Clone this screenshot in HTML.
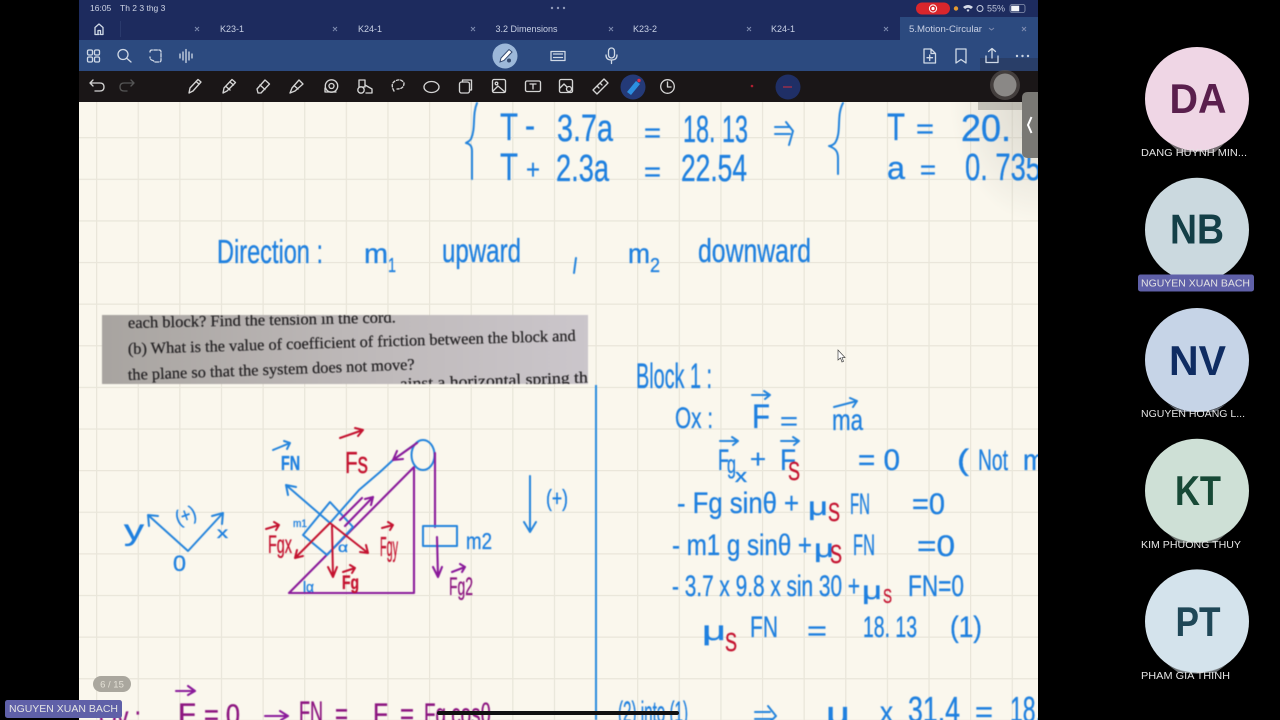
<!DOCTYPE html>
<html><head><meta charset="utf-8"><style>
html,body{margin:0;padding:0;background:#000;width:1280px;height:720px;overflow:hidden}
svg{position:absolute;left:0;top:0;display:block}
text{font-family:"Liberation Sans",sans-serif}
.h text,text.h{fill:#1f80df;stroke:#1f80df;stroke-width:.35}
.r text,text.r{fill:#c4122f;stroke:#c4122f;stroke-width:.35}
.p text,text.p{fill:#8c1580;stroke:#8c1580;stroke-width:.35}
.blue{fill:none;stroke:#2484dc;stroke-width:2;stroke-linecap:round;stroke-linejoin:round}
.red{fill:none;stroke:#c4122f;stroke-width:2;stroke-linecap:round;stroke-linejoin:round}
.pur{fill:none;stroke:#8a1a9a;stroke-width:2.1;stroke-linecap:round;stroke-linejoin:round}
.ic{fill:none;stroke:#d0d9e6;stroke-width:1.3;stroke-linecap:round;stroke-linejoin:round}
.tl{fill:none;stroke:#d4d4d4;stroke-width:1.35;stroke-linecap:round;stroke-linejoin:round}
.x{fill:none;stroke:#7f8cb0;stroke-width:1}
.tab{font-size:9px;fill:#c8d0e4}
.nm{font-size:10.5px;fill:#e4e4e4}
.av{font-size:42px;text-anchor:middle;font-weight:bold}
</style></head><body>
<svg width="1280" height="720" viewBox="0 0 1280 720" xmlns="http://www.w3.org/2000/svg">
<defs>
<pattern id="g" width="41.62" height="41.62" patternUnits="userSpaceOnUse" x="96" y="12.2">
<rect width="41.62" height="41.62" fill="#faf7ed"/>
<path d="M.6 0V41.62M0 .6H41.62" stroke="#e9e6da" stroke-width="1.3" fill="none"/>
</pattern>
<linearGradient id="bk" x1="0" x2="1" y1="0" y2="0"><stop offset="0" stop-color="#a8a4a0"/><stop offset=".5" stop-color="#bdb8b8"/><stop offset="1" stop-color="#cbc6cb"/></linearGradient>
<linearGradient id="sh" x1="0" x2="1" y1="0" y2="1"><stop offset=".3" stop-color="#b8b4aa" stop-opacity="0"/><stop offset="1" stop-color="#b8b4aa" stop-opacity="0"/></linearGradient>
<radialGradient id="sh2" cx="1" cy="0" r="1"><stop offset="0" stop-color="#a8a59c" stop-opacity=".4"/><stop offset="1" stop-color="#a8a59c" stop-opacity="0"/></radialGradient>
<clipPath id="pg"><rect x="79" y="102" width="959" height="618"/></clipPath>
<clipPath id="bc"><rect x="102" y="315" width="486" height="69"/></clipPath>
</defs>
<rect width="1280" height="720" fill="#000"/>
<!-- paper -->
<rect x="79" y="102" width="959" height="618" fill="url(#g)"/>
<rect x="950" y="102" width="88" height="120" fill="url(#sh2)"/>

<g clip-path="url(#pg)" style="filter:blur(.45px)">
<!-- book excerpt -->
<rect x="102" y="315" width="486" height="69" fill="url(#bk)"/>
<g clip-path="url(#bc)" fill="#222022" stroke="#222022" stroke-width=".2" style="font-size:16px">
<text x="128" y="328" transform="rotate(-1.2 128 328)" textLength="268" lengthAdjust="spacingAndGlyphs" style="font-family:'Liberation Serif',serif">each block? Find the tension in the cord.</text>
<text x="128" y="354" transform="rotate(-1.7 128 354)" textLength="448" lengthAdjust="spacingAndGlyphs" style="font-family:'Liberation Serif',serif">(b) What is the value of coefficient of friction between the block and</text>
<text x="128" y="380" transform="rotate(-2.1 128 380)" textLength="287" lengthAdjust="spacingAndGlyphs" style="font-family:'Liberation Serif',serif">the plane so that the system does not move?</text>
<text x="400" y="389" transform="rotate(-2 400 389)" textLength="188" lengthAdjust="spacingAndGlyphs" style="font-family:'Liberation Serif',serif">ainst a horizontal spring th</text>
</g>

<!-- top equations -->
<path class="blue" d="M477 103C472 115 476 128 471 139C469 142 467 142 466 143C470 144 472 146 472 151L472 179"/>
<path class="blue" d="M843 103C836 116 842 132 835 143C832 146 830 146 829 146C834 148 838 150 838 158L838 174"/>
<g class="h" style="font-size:38px">
<text x="500" y="140" textLength="18" lengthAdjust="spacingAndGlyphs">T</text>
<text x="525" y="138" textLength="10" lengthAdjust="spacingAndGlyphs">-</text>
<text x="557" y="141" textLength="56" lengthAdjust="spacingAndGlyphs">3.7a</text>
<text x="644" y="142" textLength="17" lengthAdjust="spacingAndGlyphs" style="font-size:28px">=</text>
<text x="683" y="142" textLength="65" lengthAdjust="spacingAndGlyphs">18. 13</text>
<text x="500" y="180" textLength="18" lengthAdjust="spacingAndGlyphs">T</text>
<text x="526" y="179" textLength="14" lengthAdjust="spacingAndGlyphs" style="font-size:28px">+</text>
<text x="556" y="181" textLength="53" lengthAdjust="spacingAndGlyphs">2.3a</text>
<text x="644" y="181" textLength="17" lengthAdjust="spacingAndGlyphs" style="font-size:28px">=</text>
<text x="681" y="181" textLength="66" lengthAdjust="spacingAndGlyphs">22.54</text>
<text x="887" y="140" textLength="18" lengthAdjust="spacingAndGlyphs">T</text>
<text x="916" y="138" textLength="18" lengthAdjust="spacingAndGlyphs" style="font-size:28px">=</text>
<text x="961" y="141" textLength="80" lengthAdjust="spacingAndGlyphs">20. 8</text>
<text x="887" y="179" textLength="18" lengthAdjust="spacingAndGlyphs" style="font-size:32px">a</text>
<text x="920" y="179" textLength="16" lengthAdjust="spacingAndGlyphs" style="font-size:28px">=</text>
<text x="965" y="180" textLength="76" lengthAdjust="spacingAndGlyphs">0. 735</text>
</g>
<path class="blue" d="M775 127H790M775 134H790M786 122L793 131L789 145"/>

<!-- direction line -->
<g class="h" style="font-size:33px">
<text x="217" y="263" textLength="106" lengthAdjust="spacingAndGlyphs">Direction :</text>
<text x="364" y="263" textLength="24" lengthAdjust="spacingAndGlyphs" style="font-size:28px">m</text>
<text x="388" y="272" textLength="8" lengthAdjust="spacingAndGlyphs" style="font-size:20px">1</text>
<text x="442" y="262" textLength="79" lengthAdjust="spacingAndGlyphs">upward</text>
<text x="628" y="263" textLength="22" lengthAdjust="spacingAndGlyphs" style="font-size:28px">m</text>
<text x="650" y="272" textLength="10" lengthAdjust="spacingAndGlyphs" style="font-size:20px">2</text>
<text x="698" y="262" textLength="113" lengthAdjust="spacingAndGlyphs">downward</text>
</g>
<path class="blue" d="M576 258L574 273"/>

<!-- vertical divider -->
<path d="M596 385V720" stroke="#2a8de0" stroke-width="2" fill="none"/>

<!-- right block -->
<g class="h" style="font-size:30px">
<text x="636" y="388" textLength="76" lengthAdjust="spacingAndGlyphs" style="font-size:35px">Block 1 :</text>
<text x="675" y="428" textLength="38" lengthAdjust="spacingAndGlyphs">Ox :</text>
<text x="752" y="428" textLength="18" lengthAdjust="spacingAndGlyphs" style="font-size:34px">F</text>
<text x="780" y="430" textLength="18" lengthAdjust="spacingAndGlyphs" style="font-size:26px">=</text>
<text x="832" y="430" textLength="31" lengthAdjust="spacingAndGlyphs">ma</text>
<text x="718" y="470" textLength="11" lengthAdjust="spacingAndGlyphs">F</text>
<text x="727" y="473" textLength="9" lengthAdjust="spacingAndGlyphs" style="font-size:26px">g</text>
<text x="735" y="482" textLength="12" lengthAdjust="spacingAndGlyphs" style="font-size:18px">x</text>
<text x="750" y="468" textLength="16" lengthAdjust="spacingAndGlyphs" style="font-size:26px">+</text>
<text x="780" y="470" textLength="16" lengthAdjust="spacingAndGlyphs">F</text>
<text x="858" y="470" textLength="42" lengthAdjust="spacingAndGlyphs">= 0</text>
<text x="957" y="470" textLength="12" lengthAdjust="spacingAndGlyphs">(</text>
<text x="978" y="470" textLength="30" lengthAdjust="spacingAndGlyphs">Not</text>
<text x="1023" y="470" textLength="22" lengthAdjust="spacingAndGlyphs">m</text>
<text x="677" y="513" textLength="122" lengthAdjust="spacingAndGlyphs">- Fg sinθ  +</text>
<text x="808" y="515" textLength="20" lengthAdjust="spacingAndGlyphs" style="font-size:26px">μ</text>
<text x="850" y="514" textLength="20" lengthAdjust="spacingAndGlyphs">FN</text>
<text x="912" y="514" textLength="33" lengthAdjust="spacingAndGlyphs">=0</text>
<text x="672" y="555" textLength="140" lengthAdjust="spacingAndGlyphs">- m1 g sinθ +</text>
<text x="814" y="557" textLength="20" lengthAdjust="spacingAndGlyphs" style="font-size:26px">μ</text>
<text x="853" y="555" textLength="22" lengthAdjust="spacingAndGlyphs">FN</text>
<text x="917" y="556" textLength="38" lengthAdjust="spacingAndGlyphs">=0</text>
<text x="672" y="596" textLength="188" lengthAdjust="spacingAndGlyphs">- 3.7 x 9.8 x sin 30 +</text>
<text x="862" y="599" textLength="20" lengthAdjust="spacingAndGlyphs" style="font-size:26px">μ</text>
<text x="908" y="596" textLength="56" lengthAdjust="spacingAndGlyphs">FN=0</text>
<text x="702" y="640" textLength="24" lengthAdjust="spacingAndGlyphs" style="font-size:28px">μ</text>
<text x="750" y="637" textLength="28" lengthAdjust="spacingAndGlyphs">FN</text>
<text x="807" y="640" textLength="20" lengthAdjust="spacingAndGlyphs" style="font-size:28px">=</text>
<text x="863" y="637" textLength="54" lengthAdjust="spacingAndGlyphs">18. 13</text>
<text x="950" y="637" textLength="32" lengthAdjust="spacingAndGlyphs">(1)</text>
<text x="618" y="722" textLength="70" lengthAdjust="spacingAndGlyphs">(2) into (1)</text>
<text x="826" y="724" textLength="24" lengthAdjust="spacingAndGlyphs" style="font-size:32px">μ</text>
<text x="880" y="722" textLength="13" lengthAdjust="spacingAndGlyphs">x</text>
<text x="908" y="722" textLength="52" lengthAdjust="spacingAndGlyphs" style="font-size:36px">31.4</text>
<text x="975" y="722" textLength="18" lengthAdjust="spacingAndGlyphs">=</text>
<text x="1010" y="722" textLength="32" lengthAdjust="spacingAndGlyphs" style="font-size:36px">18.</text>
</g>
<g class="r" style="font-size:26px">
<text x="788" y="480" textLength="12" lengthAdjust="spacingAndGlyphs">S</text>
<text x="828" y="521" textLength="12" lengthAdjust="spacingAndGlyphs">S</text>
<text x="830" y="563" textLength="12" lengthAdjust="spacingAndGlyphs">S</text>
<text x="883" y="603" textLength="9" lengthAdjust="spacingAndGlyphs" style="font-size:20px">S</text>
<text x="725" y="651" textLength="12" lengthAdjust="spacingAndGlyphs">S</text>
</g>
<path class="blue" d="M752 395H770M764 391L770 395L765 399M834 407L857 401M850 398L857 401L853 407M720 441H738M732 437L738 441L733 445M781 441H799M793 437L799 441L794 445M755 719H773M755 712H770M768 706L776 716L770 722"/>

<!-- bottom purple -->
<g class="p" style="font-size:30px">
<text x="99" y="727" textLength="42" lengthAdjust="spacingAndGlyphs">Oy :</text>
<text x="178" y="724" textLength="18" lengthAdjust="spacingAndGlyphs">F</text>
<text x="204" y="725" textLength="36" lengthAdjust="spacingAndGlyphs">= 0</text>
<text x="299" y="722" textLength="24" lengthAdjust="spacingAndGlyphs">FN</text>
<text x="335" y="724" textLength="13" lengthAdjust="spacingAndGlyphs">=</text>
<text x="373" y="724" textLength="15" lengthAdjust="spacingAndGlyphs">F</text>
<text x="400" y="724" textLength="14" lengthAdjust="spacingAndGlyphs">=</text>
<text x="424" y="724" textLength="67" lengthAdjust="spacingAndGlyphs">Fg cosθ</text>
</g>
<path class="pur" d="M176 691H194M188 686L195 691L188 695M265 716H286M280 711L288 716L281 720"/>

<!-- mechanics diagram -->
<path class="pur" d="M289 593H414V467L289 593Z"/>
<ellipse cx="423" cy="455" rx="11.5" ry="15" class="blue"/>
<path class="blue" d="M418 442L393 460L380 472L359 490L330 523"/>
<path class="blue" d="M330 502L353 527L327 555L303 535Z"/>
<path class="blue" d="M330 523L286 485M286 485L288 495M286 485L296 487"/>
<path class="pur" d="M417 443L393 460M393 460L397 451M393 460L403 459"/>
<path class="pur" d="M435 453V527"/>
<path class="blue" d="M423 526H457V546H423Z"/>
<path class="pur" d="M437 537L438 577M433 567L438 577L442 567"/>
<path class="pur" d="M345 526L373 497M365 499L373 497L371 505M340 520L362 498"/>
<path class="red" d="M330 523L295 558M297 550L295 558L303 556M330 523L368 553M360 552L368 553L366 545M332 526L333 577M328 567L333 577L337 567"/>
<path class="blue" d="M530 476V532M524 522L530 532L536 522"/>
<path class="blue" d="M148 515L188 551L223 513M148 515L149 526M148 515L158 516M223 513L212 516M223 513L222 524"/>
<path class="red" d="M340 438L363 430M355 428L363 430L358 436M266 529L279 525M274 522L279 525L276 530M382 528L393 525M388 522L393 525L390 530M343 572L355 568M350 565L355 568L352 573"/>
<path class="blue" d="M273 450L290 443M284 441L290 443L287 449"/>
<path class="pur" d="M452 572L465 567M460 564L465 567L462 572"/>
<text class="r" x="345" y="473" textLength="23" lengthAdjust="spacingAndGlyphs" style="font-size:31px">Fs</text>
<text class="h" x="281" y="470" textLength="19" lengthAdjust="spacingAndGlyphs" style="font-size:20px;font-weight:bold">FN</text>
<text class="r" x="268" y="553" textLength="24" lengthAdjust="spacingAndGlyphs" style="font-size:25px">Fgx</text>
<text class="r" x="380" y="556" textLength="18" lengthAdjust="spacingAndGlyphs" style="font-size:28px">Fgy</text>
<text class="r" x="342" y="589" textLength="17" lengthAdjust="spacingAndGlyphs" style="font-size:19px;font-weight:bold">Fg</text>
<text class="p" x="449" y="595" textLength="24" lengthAdjust="spacingAndGlyphs" style="font-size:25px">Fg2</text>
<text class="h" x="466" y="549" textLength="26" lengthAdjust="spacingAndGlyphs" style="font-size:23px">m2</text>
<text class="h" x="546" y="506" textLength="22" lengthAdjust="spacingAndGlyphs" style="font-size:23px">(+)</text>
<text class="h" x="173" y="571" textLength="13" lengthAdjust="spacingAndGlyphs" style="font-size:22px">0</text>
<text class="h" x="124" y="540" textLength="20" lengthAdjust="spacingAndGlyphs" style="font-size:30px">y</text>
<text class="h" x="217" y="538" textLength="11" lengthAdjust="spacingAndGlyphs" style="font-size:16px">x</text>
<text class="h" x="176" y="522" textLength="21" lengthAdjust="spacingAndGlyphs" transform="rotate(-20 186 518)" style="font-size:20px">(+)</text>
<text class="h" x="293" y="527" textLength="14" lengthAdjust="spacingAndGlyphs" style="font-size:11px">m1</text>
<text class="h" x="338" y="552" textLength="10" lengthAdjust="spacingAndGlyphs" style="font-size:14px">α</text>
<text class="h" x="303" y="592" textLength="11" lengthAdjust="spacingAndGlyphs" style="font-size:15px">lα</text>
</g>

<!-- pointer -->
<path d="M838 350V360L840.5 358L842 362L843.5 361.3L842 357.6L845 357.5Z" fill="#fff" stroke="#444" stroke-width=".7"/>
<!-- page pill -->
<rect x="93" y="676" width="38" height="16" rx="8" fill="#aaa79e"/>
<text x="112" y="687.5" text-anchor="middle" style="font-size:9.5px" fill="#e4e1d6">6 / 15</text>
<!-- home bar -->
<rect x="437" y="711" width="242" height="4" rx="2" fill="#111"/>

<!-- header bars -->
<rect x="79" y="0" width="959" height="40" fill="#1d2b5e"/>
<rect x="900" y="17" width="138" height="23" fill="#2c4a7f"/>
<rect x="79" y="40" width="959" height="31" fill="#2c4a7f"/>
<rect x="79" y="71" width="959" height="31" fill="#1a1617"/>
<text x="90" y="11" style="font-size:8.5px" fill="#d0d6e6">16:05</text>
<text x="120" y="11" style="font-size:8.5px" fill="#d0d6e6">Th 2 3 thg 3</text>
<circle cx="552" cy="8" r="1.2" fill="#8f99b8"/><circle cx="558" cy="8" r="1.2" fill="#8f99b8"/><circle cx="564" cy="8" r="1.2" fill="#8f99b8"/>
<rect x="916" y="2.5" width="34" height="12" rx="6" fill="#d9262c"/>
<circle cx="933" cy="8.5" r="3.6" fill="none" stroke="#fff" stroke-width="1"/><circle cx="933" cy="8.5" r="1.6" fill="#fff"/>
<circle cx="956" cy="8.5" r="2.2" fill="#e39a30"/>
<path d="M963 7Q968 3 973 7L971 9Q968 6.5 965 9ZM966.5 10Q968 8.8 969.5 10L968 12Z" fill="#d6dbe8"/>
<circle cx="980" cy="8.5" r="3" fill="none" stroke="#c8cfe0"/>
<text x="987" y="11.5" style="font-size:9px" fill="#b9c1d6">55%</text>
<rect x="1010" y="4.5" width="15" height="8" rx="2" fill="none" stroke="#8c96b2" stroke-width=".8"/>
<rect x="1011.2" y="5.7" width="8" height="5.6" fill="#f2f4f8"/>
<path d="M99 34.5H95V27.5L99 24L103 27.5V34.5H100.5V30.5H98V34.5" class="ic" stroke-width="1"/>
<path d="M120.5 21V37" stroke="#2a3a6c"/>
<text class="tab" x="220" y="32">K23-1</text>
<text class="tab" x="358" y="32">K24-1</text>
<text class="tab" x="495.5" y="32">3.2 Dimensions</text>
<text class="tab" x="633" y="32">K23-2</text>
<text class="tab" x="771" y="32">K24-1</text>
<text class="tab" x="909" y="32" textLength="73" lengthAdjust="spacingAndGlyphs">5.Motion-Circular</text>
<path class="x" d="M195 27L199 31M199 27L195 31M333 27L337 31M337 27L333 31M471 27L475 31M475 27L471 31M609 27L613 31M613 27L609 31M747 27L751 31M751 27L747 31M884 27L888 31M888 27L884 31M1022 27L1026 31M1026 27L1022 31M989 28L991.5 30L994 28"/>

<!-- toolbar 1 -->
<rect x="980" y="58" width="58" height="13" fill="#28395e" opacity=".7"/>
<g class="ic">
<rect x="87.5" y="50" width="5" height="5" rx="1.4"/><rect x="94.5" y="50" width="5" height="5" rx="1.4"/><rect x="87.5" y="57" width="5" height="5" rx="1.4"/><rect x="94.5" y="57" width="5" height="5" rx="1.4"/>
<circle cx="123" cy="54.5" r="5"/><path d="M127 58.5L131 62"/>
<path d="M150 52Q150 50 152 50H159Q161 50 161 52V60Q161 62 159 62H155L153 60.5Q150 60 150 57" stroke-dasharray="3.5 1.5"/>
<path d="M180 54V58M183 52V60M186 49.5V62.5M189 52V60M192 54V58"/>
<path d="M551 51.5H565V60.5H551ZM553.5 54H562.5M553.5 57.5H562.5"/>
<rect x="608.5" y="48" width="6" height="10" rx="3"/><path d="M606 55Q606 60 611.5 60Q617 60 617 55M611.5 60V63.5"/>
<path d="M924 49H931L935.5 53.5V63H924ZM931 49V53.5H935.5M929.7 55V60.5M927 57.7H932.5"/>
<path d="M956 49H966V63L961 59.5L956 63Z"/>
<path d="M986 56V62.5H998V56M992 58V49M988.5 51.5L992 48.5L995.5 51.5"/>
</g>
<circle cx="1017" cy="56" r="1.2" fill="#c9d3e2"/><circle cx="1022.5" cy="56" r="1.2" fill="#c9d3e2"/><circle cx="1028" cy="56" r="1.2" fill="#c9d3e2"/>
<circle cx="505" cy="56" r="12.5" fill="#9cb8d9"/>
<path d="M500 62L501 58L509 49.5L512 52L504 60.5Z" fill="#fff" stroke="#34496f" stroke-width="1"/>
<circle cx="509" cy="60.5" r="2" fill="#34496f"/>

<!-- toolbar 2 -->
<g class="tl">
<path d="M90 83H100Q104 83 104 87Q104 91 100 91H95M90 83L93 80M90 83L93 86"/>
<path d="M134 83H124Q120 83 120 87Q120 91 124 91H127M134 83L131 80M134 83L131 86" stroke="#555"/>
<path d="M189 93L190 88L198 79.5L201 82L193 91Z"/><path d="M196 81.5L199 84"/>
<path d="M223 93L224 88L232 79.5L235.5 82.5L227 91Z"/><path d="M226 86.5L230 90M230 82L233.5 85"/>
<path d="M257 89L265 80L269.5 84L261 93H258Z M260 85L265 89.5"/>
<path d="M290 93L292 88L299 80L303 84L295 91ZM294 85.5L298 89"/>
<circle cx="331.5" cy="86" r="6.2"/><circle cx="331.5" cy="86" r="2.5"/><path d="M325 92H336M325 92V88"/>
<rect x="359" y="80" width="6" height="7"/><circle cx="361" cy="90" r="3.2"/><path d="M365 85L372 89V93H366"/>
<path d="M394 91Q390 84 395 81Q401 78 404 83Q404 89 397 89" stroke-dasharray="2.5 1.8"/>
<ellipse cx="431.5" cy="87" rx="7.5" ry="5.5"/>
<rect x="459.5" y="82" width="10" height="11" rx="2"/><path d="M462.5 82V80H471.5V90H469.5"/>
<rect x="492.5" y="79.5" width="13" height="13" rx="1.5"/><circle cx="496.5" cy="83.5" r="1.3"/><path d="M493 91L498 86L505 92"/>
<rect x="525.5" y="81" width="15" height="10.5" rx="1.5"/><path d="M530 84H536M533 84V89"/>
<rect x="559.5" y="79.5" width="13" height="13" rx="1.5"/><circle cx="569" cy="89" r="2.5"/><path d="M560 88L564 84L567 87"/>
<path d="M593 90L604 79L608 83L597 94ZM597 86L599 88M600 83L602 85"/>
<circle cx="667.5" cy="86.5" r="6.8" stroke-width="1.3"/><path d="M667.5 82V87H671"/>
</g>
<circle cx="633" cy="87" r="12.5" fill="#243a78"/>
<path d="M627 92L636 81L640 84L631 95Z" fill="#2c8fe0"/><circle cx="639" cy="80.5" r="1.7" fill="#d9304a"/>
<circle cx="752" cy="86" r="1.3" fill="#b01e30"/>
<circle cx="788" cy="87" r="12.5" fill="#1f2f66"/><path d="M783 87H792" stroke="#b43046" stroke-width="1.2"/>
<rect x="978" y="102" width="44" height="8" fill="#a09e98" opacity=".55"/>
<circle cx="1005" cy="85" r="15" fill="#55504f" opacity=".7"/>
<circle cx="1005" cy="85" r="11.5" fill="#8a8886"/>
<path d="M1038 92V158H1028Q1022 158 1022 152V98Q1022 92 1028 92Z" fill="#797874"/>
<path d="M1031.5 117L1028 125L1031.5 133" fill="none" stroke="#fff" stroke-width="2"/>

<!-- participants -->
<circle cx="1197" cy="99" r="52" fill="#efd6e5"/>
<circle cx="1197" cy="229.7" r="52" fill="#cbd9df"/>
<circle cx="1197" cy="360" r="52" fill="#c6d4e7"/>
<circle cx="1197" cy="490.7" r="52" fill="#cee0d6"/>
<circle cx="1197" cy="621.4" r="52" fill="#d4e3ec"/>
<path d="M1168 142Q1197 160 1226 142L1215 152H1179Z" fill="#8d8489" opacity=".8"/>
<path d="M1168 404Q1197 420 1226 404L1215 412H1179Z" fill="#7d8490" opacity=".8"/>
<path d="M1168 534Q1197 550 1226 534L1215 543H1179Z" fill="#848c88" opacity=".8"/>
<path d="M1168 665Q1197 680 1226 665L1215 673H1179Z" fill="#868c90" opacity=".8"/>
<text class="av" x="1198" y="113" fill="#5a1f4d" textLength="57" lengthAdjust="spacingAndGlyphs">DA</text>
<text class="av" x="1197" y="243.5" fill="#143f47" textLength="54" lengthAdjust="spacingAndGlyphs">NB</text>
<text class="av" x="1197.5" y="375" fill="#0f2c62" textLength="57" lengthAdjust="spacingAndGlyphs">NV</text>
<text class="av" x="1198" y="505" fill="#174936" textLength="46" lengthAdjust="spacingAndGlyphs">KT</text>
<text class="av" x="1198" y="636" fill="#1f4757" textLength="45" lengthAdjust="spacingAndGlyphs">PT</text>
<text class="nm" x="1141" y="156" textLength="106" lengthAdjust="spacingAndGlyphs">DANG HUYNH MIN...</text>
<rect x="1138" y="274.5" width="116" height="17" rx="2.5" fill="#5f60a8"/>
<text class="nm" x="1141" y="286.5" textLength="109" lengthAdjust="spacingAndGlyphs">NGUYEN XUAN BACH</text>
<text class="nm" x="1141" y="417" textLength="104" lengthAdjust="spacingAndGlyphs">NGUYEN HOANG L...</text>
<text class="nm" x="1141" y="548" textLength="100" lengthAdjust="spacingAndGlyphs">KIM PHUONG THUY</text>
<text class="nm" x="1141" y="679" textLength="89" lengthAdjust="spacingAndGlyphs">PHAM GIA THINH</text>
<rect x="5" y="700" width="117" height="18" rx="2.5" fill="#5f60a8"/>
<text class="nm" x="9" y="712" textLength="109" lengthAdjust="spacingAndGlyphs">NGUYEN XUAN BACH</text>
</svg>
</body></html>
